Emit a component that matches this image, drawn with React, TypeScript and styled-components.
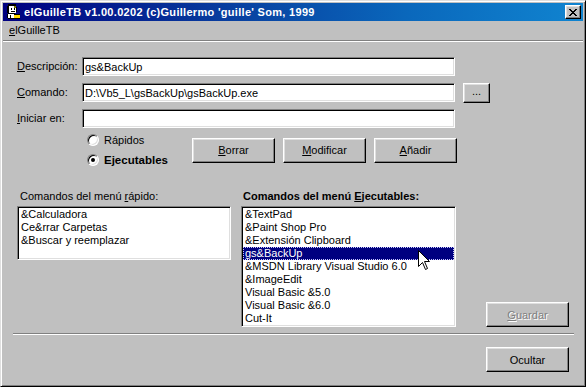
import styled, { createGlobalStyle } from 'styled-components';

const GlobalStyle = createGlobalStyle`
  html, body {
    margin: 0;
    padding: 0;
    background: #c0c0c0;
  }
  body {
    font-family: "Liberation Sans", Arial, sans-serif;
    font-size: 11px;
    color: #000;
  }
`;

const Window = styled.div`
  width: 586px;
  height: 387px;
  box-sizing: border-box;
  background: #c0c0c0;
  border: 1px solid;
  border-color: #dfdfdf #000 #000 #dfdfdf;
  box-shadow: inset 1px 1px #fff, inset -1px -1px #808080;
  padding: 2px;
  display: flex;
  flex-direction: column;
`;

const TitleBar = styled.div`
  height: 18px;
  display: flex;
  align-items: center;
  padding-left: 2px;
  background: linear-gradient(90deg, #000080 0%, #0840a0 40%, #0a68bc 70%, #1084d0 100%);
`;

const TitleText = styled.span`
  flex: 1;
  margin-left: 3px;
  color: #fff;
  font-weight: bold;
  font-size: 11px;
  letter-spacing: 0.3px;
  white-space: nowrap;
`;

const CloseButton = styled.div`
  width: 16px;
  height: 14px;
  box-sizing: border-box;
  margin-right: 2px;
  background: #c0c0c0;
  border: 1px solid;
  border-color: #fff #000 #000 #fff;
  box-shadow: inset -1px -1px #808080, inset 1px 1px #dfdfdf;
  display: flex;
  align-items: center;
  justify-content: center;
`;

const MenuBar = styled.div`
  height: 19px;
  line-height: 19px;
  padding-left: 6px;
  border-bottom: 1px solid #808080;
`;

const Client = styled.div`
  flex: 1;
  border-top: 1px solid #fff;
  padding: 0 9px 0 10px;
  display: flex;
  flex-direction: column;
`;

const Content = styled.div`
  padding: 0 5px 0 4px;
`;

const FormGrid = styled.div`
  margin-top: 15px;
  display: grid;
  grid-template-columns: 65px 373px 35px;
  grid-auto-rows: 19px;
  row-gap: 7px;
  align-items: center;
`;

const FieldLabel = styled.label`
  line-height: 13px;
`;

const TextBox = styled.input`
  height: 19px;
  width: 100%;
  box-sizing: border-box;
  margin: 0;
  padding: 0 2px;
  font-family: "Liberation Sans", Arial, sans-serif;
  font-size: 11px;
  color: #000;
  background: #fff;
  border: 1px solid;
  border-color: #808080 #fff #fff #808080;
  box-shadow: inset 1px 1px #000, inset -1px -1px #dfdfdf;
  outline: none;
`;

const Button = styled.button<{ $w?: number; $h?: number; $disabled?: boolean }>`
  width: ${(p) => p.$w ?? 83}px;
  height: ${(p) => p.$h ?? 25}px;
  box-sizing: border-box;
  margin: 0;
  padding: 0;
  font-family: "Liberation Sans", Arial, sans-serif;
  font-size: 11px;
  color: ${(p) => (p.$disabled ? '#808080' : '#000')};
  text-shadow: ${(p) => (p.$disabled ? '1px 1px #fff' : 'none')};
  background: #c0c0c0;
  border: 1px solid;
  border-color: #fff #000 #000 #fff;
  box-shadow: inset -1px -1px #808080, inset 1px 1px #dfdfdf;
  cursor: default;
`;

const BrowseButton = styled(Button)`
  margin-left: 8px;
  padding-bottom: 3px;
`;

const OptionsRow = styled.div`
  margin-top: 2px;
  height: 40px;
  display: flex;
  align-items: center;
  gap: 8px;
  margin-left: 70px;
`;

const RadioGroup = styled.div`
  width: 97px;
  display: flex;
  flex-direction: column;
`;

const RadioRow = styled.div<{ $bold?: boolean }>`
  height: 20px;
  display: flex;
  align-items: center;
  gap: 5px;
  font-weight: ${(p) => (p.$bold ? 'bold' : 'normal')};
  font-size: ${(p) => (p.$bold ? '11.5px' : '11px')};
`;

const RadioDot = styled.span<{ $checked?: boolean }>`
  position: relative;
  width: 12px;
  height: 12px;
  box-sizing: border-box;
  border-radius: 50%;
  background: #fff;
  border: 1px solid;
  border-color: #808080 #fff #fff #808080;
  box-shadow: inset 1px 1px #000, inset -1px -1px #dfdfdf;

  &::after {
    content: '';
    display: ${(p) => (p.$checked ? 'block' : 'none')};
    position: absolute;
    left: 3px;
    top: 3px;
    width: 4px;
    height: 4px;
    border-radius: 50%;
    background: #000;
  }
`;

const ListsRow = styled.div`
  margin-top: 20px;
  display: flex;
  align-items: flex-end;
`;

const ListColumn = styled.div<{ $w: number }>`
  width: ${(p) => p.$w}px;
  margin-right: 10px;
  align-self: flex-start;
`;

const ListTitle = styled.div<{ $bold?: boolean }>`
  height: 13px;
  line-height: 13px;
  margin-bottom: 3px;
  padding-left: ${(p) => (p.$bold ? 2 : 3)}px;
  font-weight: ${(p) => (p.$bold ? 'bold' : 'normal')};
  white-space: nowrap;
`;

const ListBox = styled.div<{ $h: number }>`
  position: relative;
  height: ${(p) => p.$h}px;
  box-sizing: border-box;
  padding: 1px;
  background: #fff;
  border: 1px solid;
  border-color: #808080 #fff #fff #808080;
  box-shadow: inset 1px 1px #000, inset -1px -1px #dfdfdf;
`;

const ListItem = styled.div<{ $selected?: boolean }>`
  height: 13px;
  line-height: 13px;
  padding-left: 2px;
  white-space: nowrap;
  background: ${(p) => (p.$selected ? '#000080' : 'transparent')};
  color: ${(p) => (p.$selected ? '#fff' : '#000')};
  outline: ${(p) => (p.$selected ? '1px dotted #c8c8ff' : 'none')};
  outline-offset: -1px;
`;

const Pointer = styled.svg`
  position: absolute;
  left: 176px;
  top: 43px;
`;

const SaveButton = styled(Button)`
  margin-left: auto;
`;

const Separator = styled.div`
  margin-top: 6px;
  border-top: 1px solid #808080;
  border-bottom: 1px solid #fff;
`;

const Footer = styled.div`
  display: flex;
  justify-content: flex-end;
  padding: 12px 5px 0 0;
`;

const AppIcon = () => (
  <svg width="16" height="16" viewBox="0 0 16 16" shapeRendering="crispEdges">
    <rect x="3" y="0" width="8" height="2" fill="#000" />
    <rect x="2" y="2" width="2" height="7" fill="#000" />
    <rect x="4" y="2" width="7" height="7" fill="#fff" />
    <rect x="9" y="2" width="2" height="2" fill="#808000" />
    <rect x="6" y="4" width="1" height="2" fill="#000" />
    <rect x="9" y="4" width="1" height="2" fill="#000" />
    <rect x="11" y="3" width="1" height="5" fill="#000" />
    <rect x="6" y="7" width="4" height="1" fill="#000" />
    <rect x="3" y="9" width="7" height="1" fill="#000" />
    <rect x="3" y="10" width="6" height="4" fill="#fff" />
    <rect x="2" y="10" width="1" height="4" fill="#000" />
    <rect x="5" y="11" width="1" height="3" fill="#000" />
    <rect x="9" y="10" width="6" height="4" fill="#ffd800" />
    <rect x="9" y="10" width="6" height="1" fill="#000" />
    <rect x="3" y="14" width="12" height="1" fill="#000" />
  </svg>
);

const U = styled.span`
  text-decoration: underline;
`;

const quickItems = ['&Calculadora', 'Ce&rrar Carpetas', '&Buscar y reemplazar'];
const execItems = [
  '&TextPad',
  '&Paint Shop Pro',
  '&Extensión Clipboard',
  'gs&BackUp',
  '&MSDN Library Visual Studio 6.0',
  '&ImageEdit',
  'Visual Basic &5.0',
  'Visual Basic &6.0',
  'Cut-It',
];

export default function App() {
  return (
    <>
      <GlobalStyle />
      <Window>
        <TitleBar>
          <AppIcon />
          <TitleText>elGuilleTB v1.00.0202 (c)Guillermo 'guille' Som, 1999</TitleText>
          <CloseButton>
            <svg width="8" height="7" viewBox="0 0 8 7" shapeRendering="crispEdges">
              <path d="M0 0h2v1h-2zM6 0h2v1h-2zM1 1h2v1h-2zM5 1h2v1h-2zM2 2h4v1h-4zM3 3h2v1h-2zM2 4h4v1h-4zM1 5h2v1h-2zM5 5h2v1h-2zM0 6h2v1h-2zM6 6h2v1h-2z" fill="#000" />
            </svg>
          </CloseButton>
        </TitleBar>
        <MenuBar>
          <U>e</U>lGuilleTB
        </MenuBar>
        <Client>
          <Content>
            <FormGrid>
              <FieldLabel>
                <U>D</U>escripción:
              </FieldLabel>
              <TextBox readOnly value="gs&BackUp" />
              <span />
              <FieldLabel>
                <U>C</U>omando:
              </FieldLabel>
              <TextBox readOnly value="D:\Vb5_L\gsBackUp\gsBackUp.exe" />
              <BrowseButton $w={27} $h={20}>...</BrowseButton>
              <FieldLabel>
                <U>I</U>niciar en:
              </FieldLabel>
              <TextBox readOnly value="" />
              <span />
            </FormGrid>

            <OptionsRow>
              <RadioGroup>
                <RadioRow>
                  <RadioDot />
                  Rápidos
                </RadioRow>
                <RadioRow $bold>
                  <RadioDot $checked />
                  Ejecutables
                </RadioRow>
              </RadioGroup>
              <Button>
                <U>B</U>orrar
              </Button>
              <Button>
                <U>M</U>odificar
              </Button>
              <Button>
                <U>A</U>ñadir
              </Button>
            </OptionsRow>

            <ListsRow>
              <ListColumn $w={214}>
                <ListTitle>
                  Comandos del menú <U>r</U>ápido:
                </ListTitle>
                <ListBox $h={54}>
                  {quickItems.map((item) => (
                    <ListItem key={item}>{item}</ListItem>
                  ))}
                </ListBox>
              </ListColumn>
              <ListColumn $w={215}>
                <ListTitle $bold>
                  Comandos del menú <U>E</U>jecutables:
                </ListTitle>
                <ListBox $h={121}>
                  {execItems.map((item, idx) => (
                    <ListItem key={item} $selected={idx === 3}>
                      {item}
                    </ListItem>
                  ))}
                  <Pointer width="13" height="21" viewBox="0 0 13 21">
                    <path
                      d="M0.5 0.5 L0.5 16.5 L4.5 12.5 L7.5 19.5 L9.5 18.5 L6.5 11.5 L11.5 11.5 Z"
                      fill="#fff"
                      stroke="#000"
                      strokeWidth="1"
                    />
                  </Pointer>
                </ListBox>
              </ListColumn>
              <SaveButton $disabled>
                <U>G</U>uardar
              </SaveButton>
            </ListsRow>
          </Content>
          <Separator />
          <Footer>
            <Button>Ocultar</Button>
          </Footer>
        </Client>
      </Window>
    </>
  );
}
